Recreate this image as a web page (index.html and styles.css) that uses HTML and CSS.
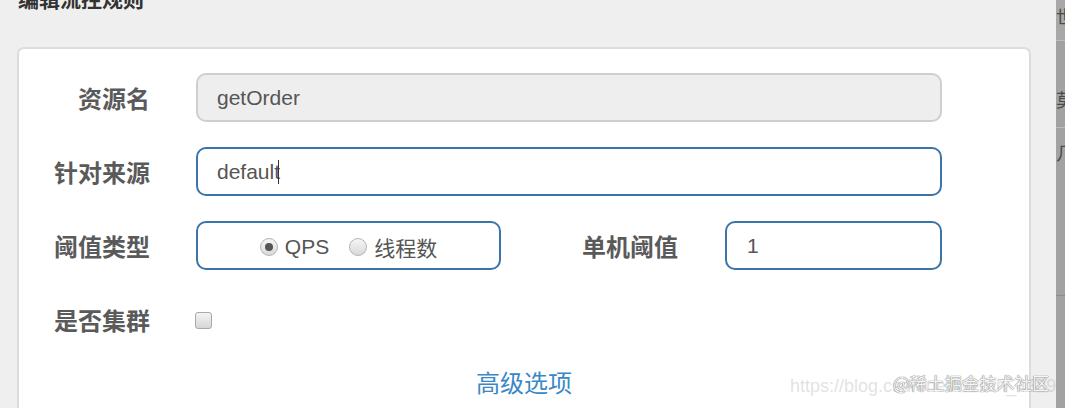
FILE: index.html
```html
<!DOCTYPE html>
<html lang="zh">
<head>
<meta charset="utf-8">
<title>编辑流控规则</title>
<link rel="stylesheet" href="styles.css">
</head>
<body>
<div class="page">
  <main class="main">
    <div class="title">编辑流控规则</div>
    <section class="card">
      <div class="row">
        <label class="label">资源名</label>
        <div class="input disabled">getOrder</div>
      </div>
      <div class="row">
        <label class="label">针对来源</label>
        <div class="input focus">default<span class="caret"></span></div>
      </div>
      <div class="row">
        <label class="label">阈值类型</label>
        <div class="radio-box">
          <span class="radio checked"></span><span class="radio-text">QPS</span>
          <span class="radio second"></span><span class="radio-text">线程数</span>
        </div>
        <label class="label label-mid">单机阈值</label>
        <div class="input short">1</div>
      </div>
      <div class="row">
        <label class="label">是否集群</label>
        <span class="checkbox"></span>
      </div>
      <div class="advanced">高级选项</div>
    </section>
    <div class="watermark">
      <span class="wm-url">https://blog.csdn.net/weixin_43895362</span>
      <span class="wm-brand">@稀土掘金技术社区</span>
    </div>
  </main>
  <aside class="strip">
    <div class="strip-a">世</div>
    <div class="strip-b">莫</div>
    <div class="strip-c">几</div>
    <div class="strip-d"></div>
  </aside>
</div>
</body>
</html>
```

FILE: styles.css
```css
html, body {
  margin: 0;
  padding: 0;
}
body {
  background: #efefef;
  font-family: "Liberation Sans", Arial, "Noto Sans CJK SC", sans-serif;
  color: #555;
  overflow: hidden;
  width: 1065px;
  height: 408px;
}
.page {
  display: flex;
  height: 408px;
}
.main {
  position: relative;
  width: 1056px;
  padding-left: 17px;
  box-sizing: border-box;
}
.title {
  margin-top: -16px;
  height: 28px;
  line-height: 28px;
  padding-left: 1px;
  font-family: "Noto Sans CJK SC", sans-serif;
  font-weight: 700;
  font-size: 21px;
  color: #333;
}
.card {
  margin-top: 35px;
  width: 1014px;
  height: 361px;
  box-sizing: border-box;
  background: #fff;
  border: 2px solid #dcdcdc;
  border-bottom: none;
  border-radius: 7px 7px 0 0;
  padding: 24px 0 0 0;
}
.row {
  display: flex;
  align-items: center;
  height: 49px;
  margin-bottom: 25px;
}
.label {
  width: 131px;
  flex: none;
  text-align: right;
  font-family: "Noto Sans CJK SC", sans-serif;
  font-weight: 700;
  font-size: 24px;
  color: #5a5a5a;
  margin-right: 46px;
  line-height: 49px;
}
.label-mid {
  width: 177px;
  margin-right: 47px;
}
.input {
  box-sizing: border-box;
  width: 746px;
  height: 49px;
  border: 2px solid #ccc;
  border-radius: 10px;
  padding: 0 19px;
  font-size: 21px;
  line-height: 45px;
  color: #555;
  background: #fff;
  display: flex;
  align-items: center;
}
.input.disabled {
  background: #eeeeee;
  border-color: #cfcfcf;
}
.input.focus {
  border-color: #3b74a8;
}
.input.short {
  width: 217px;
  border-color: #3b74a8;
  padding-left: 20px;
}
.caret {
  display: inline-block;
  width: 1px;
  height: 24px;
  background: #333;
  margin-left: -2px;
}
.radio-box {
  box-sizing: border-box;
  width: 305px;
  height: 49px;
  border: 2px solid #3b74a8;
  border-radius: 10px;
  display: flex;
  align-items: center;
  justify-content: center;
  font-size: 21px;
  color: #555;
  padding-top: 2px;
}
.radio {
  position: relative;
  width: 18px;
  height: 18px;
  box-sizing: border-box;
  border-radius: 50%;
  border: 1px solid #b4b4b4;
  background: linear-gradient(#f6f6f6, #d9d9d9);
  margin-right: 7px;
}
.radio.checked::after {
  content: "";
  position: absolute;
  left: 4px;
  top: 4px;
  width: 8px;
  height: 8px;
  border-radius: 50%;
  background: #555;
}
.radio.second {
  margin-left: 20px;
}
.radio-text {
  line-height: 24px;
}
.radio-text:last-child {
  font-family: "Noto Sans CJK SC", sans-serif;
  font-size: 21px;
}
.checkbox {
  display: block;
  width: 17px;
  height: 17px;
  box-sizing: border-box;
  border: 1px solid #a9a9a9;
  border-radius: 3px;
  background: linear-gradient(#f4f4f4, #d6d6d6);
  margin-top: 2px;
  margin-left: -1px;
}
.advanced {
  margin-top: -4px;
  text-align: center;
  font-family: "Noto Sans CJK SC", sans-serif;
  font-size: 24px;
  line-height: 34px;
  color: #3a88c6;
}
.watermark {
  position: absolute;
  left: 790px;
  top: 370px;
  width: 266px;
  height: 30px;
  white-space: nowrap;
  overflow: hidden;
}
.wm-url {
  position: absolute;
  left: 0;
  top: 6px;
  font-size: 18px;
  color: rgba(180, 180, 180, 0.4);
}
.wm-brand {
  position: absolute;
  left: 103px;
  top: 0;
  font-family: "Noto Sans CJK SC", sans-serif;
  font-size: 17.5px;
  line-height: 26px;
  color: #f4f4f4;
  text-shadow: 0 0 1px #777, 0 0 1px #777;
}
.strip {
  width: 9px;
  height: 408px;
  background: #a2a2a2;
  overflow: hidden;
  font-family: "Noto Sans CJK SC", sans-serif;
  font-size: 18px;
  color: #4a4a4a;
  white-space: nowrap;
}
.strip-a {
  height: 40px;
  line-height: 32px;
  border-bottom: 1px solid #bdbdbd;
  background: #a8a8a8;
}
.strip-b {
  height: 86px;
  line-height: 116px;
  border-bottom: 1px solid #bdbdbd;
}
.strip-c {
  height: 167px;
  line-height: 48px;
  border-bottom: 1px solid #8c8c8c;
}
```
